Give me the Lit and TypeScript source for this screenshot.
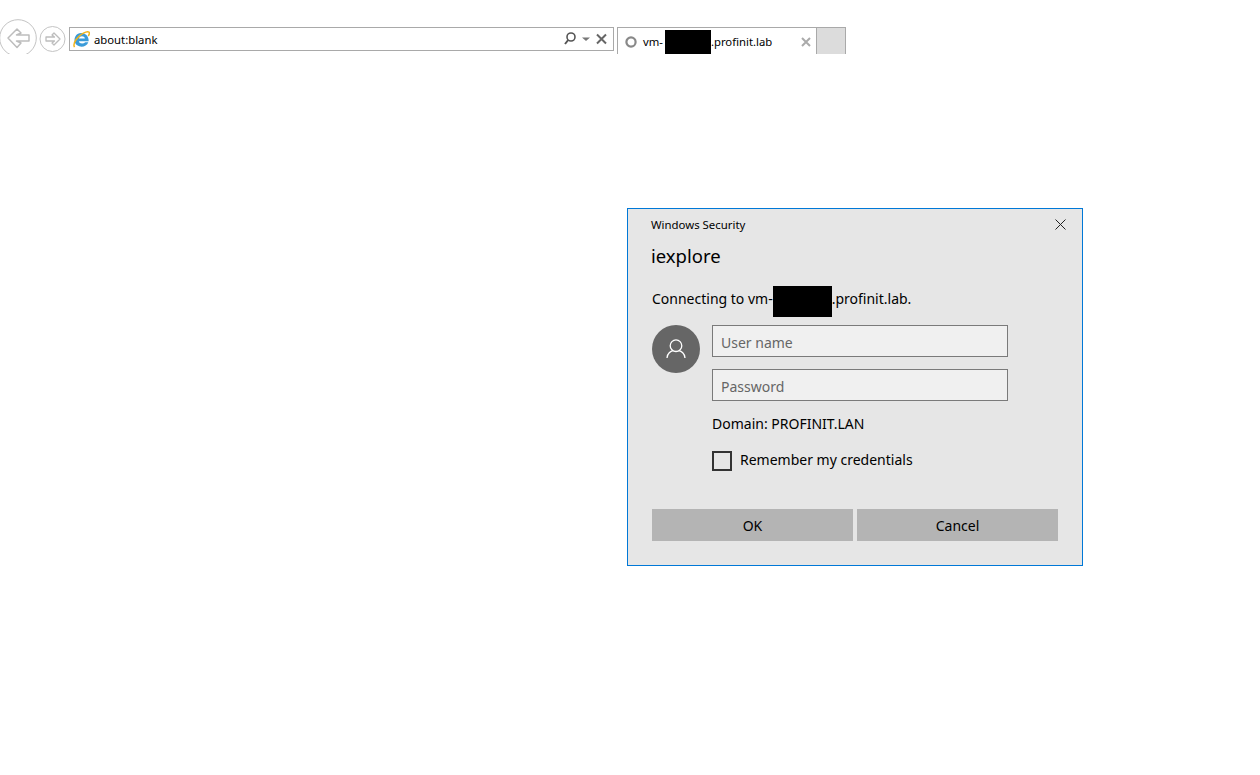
import { LitElement, html, css } from "lit";
import { customElement } from "lit/decorators.js";

@customElement("app-root")
export class AppRoot extends LitElement {
  static styles = css`
    :host { display: block; position: relative; width: 1260px; height: 775px; background: #fff; overflow: hidden; font-family: "Noto Sans", "Open Sans", sans-serif; color: #000; }
    .toolbar { display: flex; align-items: flex-start; height: 54px; overflow: hidden; }
    .nav { display: block; flex: none; width: 69px; height: 54px; }
    .address { box-sizing: border-box; flex: none; width: 545px; height: 24px; margin-top: 27px; border: 1px solid #a9a9a9; display: flex; align-items: center; padding: 0 5px 0 3px; font-size: 11.3px; color: #000; }
    .address svg.ie { flex: none; width: 17px; height: 17px; margin-right: 4px; }
    .address .url { flex: 1; }
    .tools { display: block; flex: none; width: 46px; height: 16px; }
    .tab { box-sizing: border-box; flex: none; width: 200px; height: 27px; margin: 27px 0 0 3px; border: 1px solid #a9a9a9; border-bottom: 0; display: flex; align-items: center; padding: 1px 5px 0 6px; font-size: 11.3px; color: #000; }
    .tab .spin { flex: none; width: 14px; height: 14px; margin-right: 5px; }
    .tab .title { flex: 1; display: flex; align-items: center; white-space: nowrap; }
    .tab .mask { width: 46px; height: 25px; background: #000; margin: 1px 0 0 2px; }
    .tab .close { flex: none; width: 10px; height: 10px; }
    .newtab { flex: none; box-sizing: border-box; width: 29px; height: 27px; margin-top: 27px; background: #dcdcdc; border-top: 1px solid #a9a9a9; border-right: 1px solid #a9a9a9; }

    .dialog { position: absolute; left: 627px; top: 208px; box-sizing: border-box; width: 456px; height: 358px; background: #e6e6e6; border: 1px solid #0078d7; padding: 0 24px; }
    .caption { display: flex; justify-content: space-between; align-items: center; height: 31px; font-size: 11.4px; color: #000; margin-left: -1px; }
    .caption svg { width: 11px; height: 11px; margin-right: -8px; }
    h1 { margin: 2px 0 0 -1px; font-weight: 400; font-size: 18.5px; line-height: 28px; color: #000; }
    .connect { display: flex; align-items: flex-start; height: 31px; margin-top: 16px; font-size: 14px; line-height: 25px; color: #000; white-space: nowrap; }
    .connect .mask { width: 59px; height: 31px; background: #000; }
    .cred { display: grid; grid-template-columns: 48px 296px; column-gap: 12px; margin-top: 8px; }
    .avatar { width: 48px; height: 48px; border-radius: 50%; background: #666; display: flex; align-items: center; justify-content: center; }
    .avatar svg { width: 24px; height: 24px; }
    .fields { display: flex; flex-direction: column; }
    .input { box-sizing: border-box; height: 32px; border: 1px solid #7a7a7a; background: #f0f0f0; padding: 2px 8px 0; display: flex; align-items: center; font-size: 14px; color: #666; margin-bottom: 12px; }
    .domain { font-size: 14px; line-height: 22px; color: #000; }
    .remember { display: flex; align-items: center; margin-top: 16px; font-size: 14px; line-height: 20px; color: #000; }
    .remember .label { margin-top: -2px; }
    .box { box-sizing: border-box; width: 20px; height: 20px; border: 2px solid #333; margin-right: 8px; }
    .buttons { display: flex; gap: 4px; margin-top: 38px; }
    .btn { width: 201px; height: 32px; background: #b4b4b4; display: flex; align-items: center; justify-content: center; font-size: 14px; color: #000; }
  `;

  render() {
    return html`
      <div class="toolbar">
        <svg class="nav" viewBox="0 0 69 54" fill="none">
          <circle cx="18" cy="38" r="18.3" stroke="#c4c4c4" stroke-width="1"/>
          <path d="M8 38 L17 29 L21 33 L16.5 35 H29 V41 H16.5 L21 43 L17 47.5 Z" stroke="#bdbdbd" stroke-width="1.5" stroke-linejoin="round"/>
          <circle cx="52.5" cy="39" r="12.5" stroke="#c4c4c4" stroke-width="1"/>
          <path d="M60 39 L54 33 L52 35 L54.5 37 H46 V41 H54.5 L52 43 L54 45 Z" stroke="#bdbdbd" stroke-width="1.3" stroke-linejoin="round"/>
        </svg>
        <div class="address">
          <svg class="ie" viewBox="0 0 18 18" fill="none">
            <path d="M16.6 10.8 H6.2 C6.6 13.4 10.6 14 13 11.9 H16.2 C14.6 16.6 8.4 18 4.4 15.2 C.4 12.2 .8 5.8 4.8 3.2 C9.2 .4 17 3 16.6 10.8 Z M6.3 8 H12.6 C12.2 4.9 6.9 4.9 6.3 8 Z" fill="#3a9bd9" fill-rule="evenodd"/>
            <path d="M1.6 17 C-0.8 13 5 5.2 11 2.2 C14.4 .6 17.4 .2 17.4 2.2 C17.4 3.2 16.8 4.4 16.2 5.4" stroke="#f2b41b" stroke-width="1.6"/>
          </svg>
          <span class="url">about:blank</span>
          <svg class="tools" viewBox="0 0 46 16" fill="none">
            <circle cx="9" cy="6" r="4" stroke="#555" stroke-width="1.6"/>
            <path d="M6.2 9 L3 13" stroke="#555" stroke-width="2"/>
            <path d="M20 6.5 H28 L24 10 Z" fill="#777"/>
            <path d="M35 3.5 L44 12.5 M44 3.5 L35 12.5" stroke="#666" stroke-width="2"/>
          </svg>
        </div>
        <div class="tab">
          <svg class="spin" viewBox="0 0 14 14" fill="none"><circle cx="7" cy="7" r="4.6" stroke="#888" stroke-width="2.2"/></svg>
          <span class="title">vm-<span class="mask"></span>.profinit.lab</span>
          <svg class="close" viewBox="0 0 10 10" fill="none"><path d="M1 1 L9 9 M9 1 L1 9" stroke="#aaa" stroke-width="2"/></svg>
        </div>
        <div class="newtab"></div>
      </div>

      <div class="dialog">
        <div class="caption">
          <span>Windows Security</span>
          <svg viewBox="0 0 11 11" fill="none"><path d="M0.5 0.5 L10.5 10.5 M10.5 0.5 L0.5 10.5" stroke="#222" stroke-width="1"/></svg>
        </div>
        <h1>iexplore</h1>
        <div class="connect">Connecting to vm-<span class="mask"></span>.profinit.lab.</div>
        <div class="cred">
          <div class="avatar">
            <svg viewBox="0 0 24 24" fill="none" stroke="#fff" stroke-width="1.3">
              <circle cx="12" cy="8.7" r="5.8"/>
              <path d="M3 21 C3 16.5 7 14 9 13.6 M21 21 C21 16.5 17 14 15 13.6"/>
            </svg>
          </div>
          <div class="fields">
            <div class="input">User name</div>
            <div class="input">Password</div>
            <div class="domain">Domain: PROFINIT.LAN</div>
            <div class="remember"><span class="box"></span><span class="label">Remember my credentials</span></div>
          </div>
        </div>
        <div class="buttons">
          <div class="btn">OK</div>
          <div class="btn">Cancel</div>
        </div>
      </div>
    `;
  }
}
